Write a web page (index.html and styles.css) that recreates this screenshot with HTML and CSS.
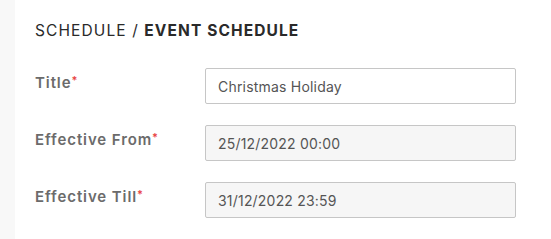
FILE: index.html
```html
<!DOCTYPE html>
<html lang="en">
<head>
    <meta charset="UTF-8">
    <title>Event Schedule</title>
    <link rel="stylesheet" href="styles.css">
</head>
<body>
    <div class="page">
        <div class="side-strip"></div>
        <main class="content">
            <h1 class="breadcrumb">SCHEDULE / <strong>EVENT SCHEDULE</strong></h1>

            <form class="event-form">
                <div class="form-row">
                    <label for="title">Title<span class="req">*</span></label>
                    <input id="title" type="text" value="Christmas Holiday">
                </div>
                <div class="form-row">
                    <label for="from">Effective From<span class="req">*</span></label>
                    <input id="from" type="text" value="25/12/2022 00:00" disabled>
                </div>
                <div class="form-row">
                    <label for="till">Effective Till<span class="req">*</span></label>
                    <input id="till" type="text" value="31/12/2022 23:59" disabled>
                </div>
            </form>
        </main>
    </div>
</body>
</html>
```

FILE: styles.css
```css
* {
    box-sizing: border-box;
    margin: 0;
    padding: 0;
}

body {
    background: #fff;
    font-family: 'Inter', 'Lato', sans-serif;
    color: #222;
}

.page {
    display: flex;
    min-height: 100vh;
}

.side-strip {
    width: 15px;
    background: #f8f8f8;
}

.content {
    flex: 1;
    padding: 20px 0 0 20px;
}

.breadcrumb {
    font-size: 15.5px;
    font-weight: 400;
    line-height: 22px;
    letter-spacing: 1.1px;
    color: #2a2a2a;
}

.breadcrumb strong {
    font-weight: 700;
}

.event-form {
    display: flex;
    flex-direction: column;
    gap: 21px;
    margin-top: 26px;
}

.form-row {
    display: grid;
    grid-template-columns: 170px 311px;
    align-items: start;
}

.form-row label {
    padding-top: 5px;
    font-size: 15px;
    font-weight: 600;
    line-height: 20px;
    letter-spacing: 0.9px;
    color: #6b6b6b;
}

.req {
    color: #e84545;
    font-size: 11px;
    vertical-align: top;
    line-height: 14px;
}

.form-row input {
    height: 36px;
    padding: 0 12px;
    border: 1px solid #c6c6c6;
    border-radius: 2px;
    background: #fff;
    font-family: inherit;
    font-size: 14px;
    letter-spacing: 0.2px;
    color: #555;
    outline: none;
}

.form-row input:disabled {
    background: #f6f6f6;
    color: #555;
}
```
